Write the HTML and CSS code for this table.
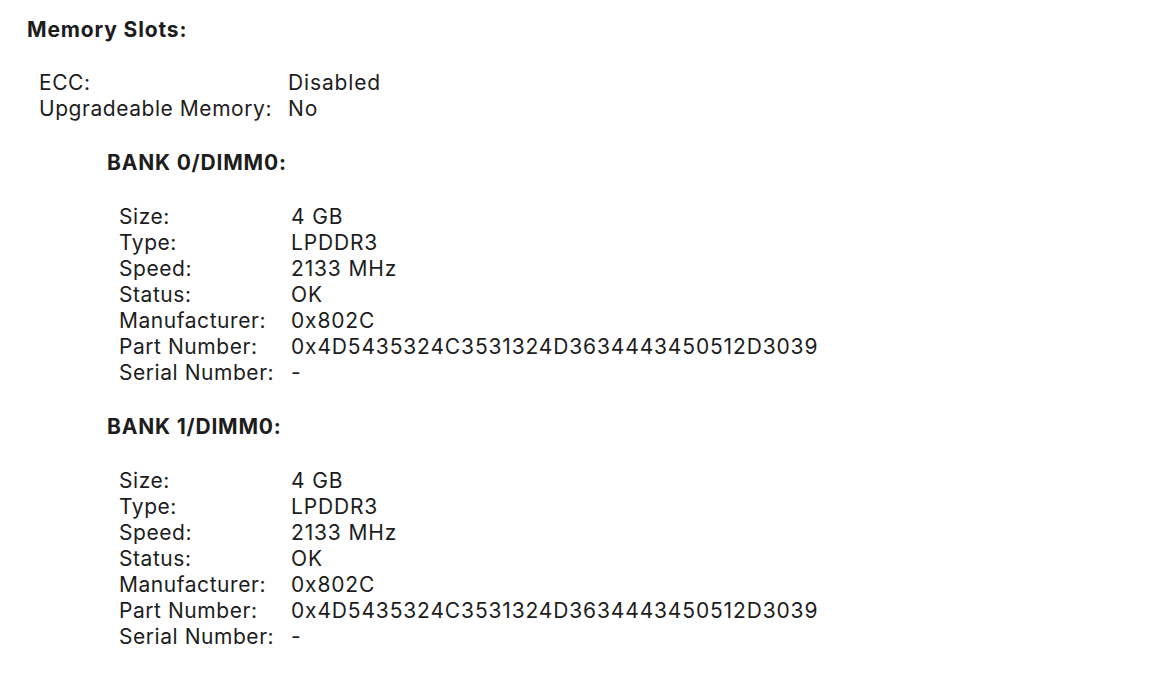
FILE: index.html
```html
<!DOCTYPE html>
<html>
<head>
<meta charset="utf-8">
<link rel="stylesheet" href="styles.css">
</head>
<body>
<div class="page">
  <h1 class="title">Memory Slots:</h1>
  <div class="props top">
    <div class="k">ECC:</div><div class="v">Disabled</div>
    <div class="k">Upgradeable Memory:</div><div class="v">No</div>
  </div>

  <section class="bank">
    <h2 class="bank-title">BANK 0/DIMM0:</h2>
    <div class="props inner">
      <div class="k">Size:</div><div class="v">4 GB</div>
      <div class="k">Type:</div><div class="v">LPDDR3</div>
      <div class="k">Speed:</div><div class="v">2133 MHz</div>
      <div class="k">Status:</div><div class="v">OK</div>
      <div class="k">Manufacturer:</div><div class="v">0x802C</div>
      <div class="k">Part Number:</div><div class="v">0x4D5435324C3531324D3634443450512D3039</div>
      <div class="k">Serial Number:</div><div class="v">-</div>
    </div>
  </section>

  <section class="bank">
    <h2 class="bank-title">BANK 1/DIMM0:</h2>
    <div class="props inner">
      <div class="k">Size:</div><div class="v">4 GB</div>
      <div class="k">Type:</div><div class="v">LPDDR3</div>
      <div class="k">Speed:</div><div class="v">2133 MHz</div>
      <div class="k">Status:</div><div class="v">OK</div>
      <div class="k">Manufacturer:</div><div class="v">0x802C</div>
      <div class="k">Part Number:</div><div class="v">0x4D5435324C3531324D3634443450512D3039</div>
      <div class="k">Serial Number:</div><div class="v">-</div>
    </div>
  </section>
</div>
</body>
</html>
```
FILE: styles.css
```css
html, body {
  margin: 0;
  padding: 0;
  background: #ffffff;
}
body {
  font-family: "Inter", "Liberation Sans", sans-serif;
  font-size: 21px;
  line-height: 26px;
  letter-spacing: 0.7px;
  color: #1d1d1d;
}
.page {
  padding: 17px 0 0 27px;
}
.title {
  margin: 0 0 27px 0;
  font-size: 21px;
  line-height: 26px;
  font-weight: 700;
  letter-spacing: 0.85px;
}
.props {
  display: grid;
  row-gap: 0;
}
.props.top {
  margin-left: 12px;
  grid-template-columns: 249px auto;
}
.bank {
  margin: 28px 0 0 80px;
}
.bank-title {
  margin: 0 0 28px 0;
  font-size: 21px;
  line-height: 26px;
  font-weight: 700;
  letter-spacing: 0.8px;
}
.props.inner {
  margin-left: 12px;
  grid-template-columns: 172px auto;
}
.k, .v {
  white-space: nowrap;
}
.k {
  letter-spacing: 0.55px;
}
.v {
  letter-spacing: 0.85px;
}
```
